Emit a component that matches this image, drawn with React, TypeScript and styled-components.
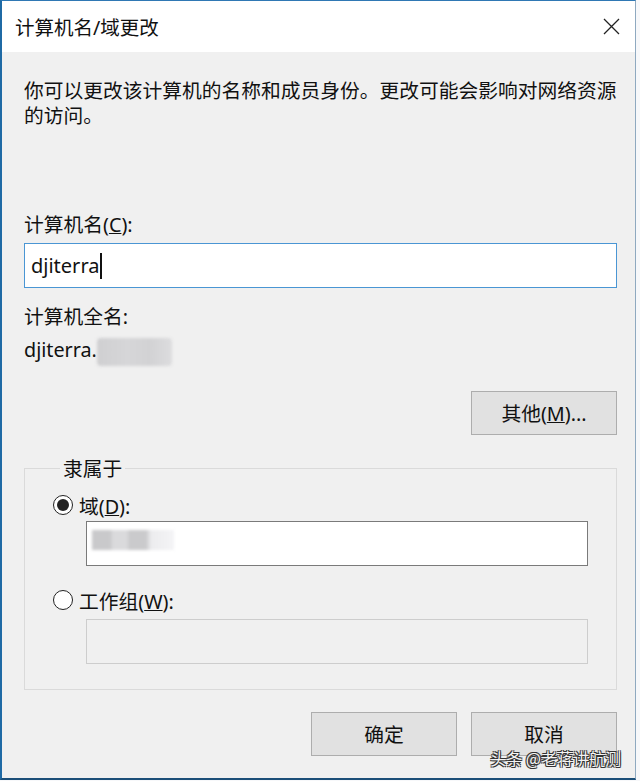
import React from "react";
import styled, { createGlobalStyle } from "styled-components";

const GlobalStyle = createGlobalStyle`
    html, body {
        margin: 0;
        padding: 0;
        background: #f7f8fa;
    }
    body {
        font-family: "Noto Sans", "Noto Sans CJK SC", sans-serif;
        color: #111;
    }
`;

const Window = styled.div`
    position: relative;
    width: 636px;
    height: 780px;
    box-sizing: border-box;
    display: flex;
    flex-direction: column;
    border-left: 2px solid #1f6aa5;
    border-top: 1px solid #2f78b4;
    border-right: 1px solid #8fa9c0;
    border-bottom: 2px solid #1b4e78;
    background: #f0f0f0;
`;

const TitleBar = styled.div`
    height: 51px;
    flex-shrink: 0;
    display: flex;
    align-items: center;
    justify-content: space-between;
    padding: 0 15px 0 13px;
    background: #ffffff;
`;

const Title = styled.div`
    font-size: 19.5px;
    color: #111;
`;

const CloseButton = styled.div`
    width: 18px;
    height: 18px;
    display: flex;
    align-items: center;
    justify-content: center;
`;

const Body = styled.div`
    flex: 1;
    display: flex;
    flex-direction: column;
    padding: 26px 18px 0 22px;
`;

const Text = styled.div<{ $top?: number }>`
    font-size: 19.75px;
    line-height: 25px;
    margin-top: ${(p) => p.$top ?? 0}px;
`;

const Edit = styled.div<{ $top?: number; $focused?: boolean; $disabled?: boolean }>`
    height: 45px;
    box-sizing: border-box;
    margin-top: ${(p) => p.$top ?? 0}px;
    display: flex;
    align-items: center;
    padding: 0 6px;
    font-size: 20px;
    background: ${(p) => (p.$disabled ? "#f0f0f0" : "#ffffff")};
    border: 1px solid
        ${(p) => (p.$focused ? "#4a96d4" : p.$disabled ? "#cdcdcd" : "#7a7a7a")};
`;

const Caret = styled.span`
    display: inline-block;
    width: 1.5px;
    height: 26px;
    background: #111;
    margin-left: 1px;
`;

const Blur = styled.span<{ $w: number; $h: number }>`
    display: inline-block;
    width: ${(p) => p.$w}px;
    height: ${(p) => p.$h}px;
    vertical-align: middle;
    background: linear-gradient(
        90deg,
        #cfcfd1 0%,
        #d6d6d8 40%,
        #d2d2d4 70%,
        #dcdcde 100%
    );
    border-radius: 4px;
    filter: blur(1.5px);
`;

const DomainBlur = styled.span`
    display: inline-block;
    width: 82px;
    height: 20px;
    margin-left: -1px;
    background: linear-gradient(
        90deg,
        #c9c9cb 0%,
        #c9c9cb 22%,
        #dadadc 26%,
        #dadadc 42%,
        #cacacc 46%,
        #cacacc 66%,
        #ececee 72%,
        #f4f4f6 100%
    );
    filter: blur(1.5px);
    margin-top: -6px;
`;

const Row = styled.div<{ $top?: number }>`
    display: flex;
    justify-content: flex-end;
    gap: 14px;
    margin-top: ${(p) => p.$top ?? 0}px;
`;

const Button = styled.div`
    width: 146px;
    height: 44px;
    box-sizing: border-box;
    display: flex;
    align-items: center;
    justify-content: center;
    font-size: 19.75px;
    background: #e1e1e1;
    border: 1px solid #adadad;
    color: #111;
`;

const Group = styled.fieldset`
    margin: 21px 0 0 0;
    padding: 12px 28px 25px 28px;
    border: 1px solid #dadada;
    min-width: 0;
`;

const Legend = styled.legend`
    font-size: 19.75px;
    line-height: 25px;
    padding: 0 3px;
    margin-left: 7px;
`;

const RadioRow = styled.div<{ $top?: number }>`
    display: flex;
    align-items: center;
    gap: 6px;
    height: 25px;
    font-size: 19.75px;
    margin-top: ${(p) => p.$top ?? 0}px;
`;

const RadioCircle = styled.span<{ $checked?: boolean }>`
    width: 20px;
    height: 20px;
    box-sizing: border-box;
    border-radius: 50%;
    border: 1.5px solid #222;
    background: #fff;
    display: flex;
    align-items: center;
    justify-content: center;
    &::after {
        content: "";
        width: 12px;
        height: 12px;
        border-radius: 50%;
        background: ${(p) => (p.$checked ? "#222" : "transparent")};
    }
`;

const Indented = styled.div`
    margin-left: 33px;
`;

const Watermark = styled.div`
    position: absolute;
    right: 14px;
    bottom: 12px;
    font-family: "Noto Sans CJK SC", sans-serif;
    font-size: 16px;
    line-height: 16px;
    color: #f4f4f4;
    text-shadow:
        1px 1px 0 #333,
        -1px -1px 0 #333,
        1px -1px 0 #333,
        -1px 1px 0 #333;
`;

const App = () => {
    return (
        <>
            <GlobalStyle />
            <Window>
                <TitleBar>
                    <Title>计算机名/域更改</Title>
                    <CloseButton>
                        <svg width="17" height="17" viewBox="0 0 17 17">
                            <path
                                d="M1 1 L16 16 M16 1 L1 16"
                                stroke="#222"
                                strokeWidth="1.3"
                                fill="none"
                            />
                        </svg>
                    </CloseButton>
                </TitleBar>
                <Body>
                    <Text>
                        你可以更改该计算机的名称和成员身份。更改可能会影响对网络资源
                        <br />
                        的访问。
                    </Text>
                    <Text $top={84}>
                        计算机名(<u>C</u>):
                    </Text>
                    <Edit $top={6} $focused>
                        djiterra
                        <Caret />
                    </Edit>
                    <Text $top={16}>计算机全名:</Text>
                    <Text $top={8}>
                        djiterra.
                        <Blur $w={75} $h={28} />
                    </Text>
                    <Row $top={25}>
                        <Button>
                            <span>
                                其他(<u>M</u>)...
                            </span>
                        </Button>
                    </Row>
                    <Group>
                        <Legend>隶属于</Legend>
                        <RadioRow>
                            <RadioCircle $checked />
                            <span>
                                域(<u>D</u>):
                            </span>
                        </RadioRow>
                        <Indented>
                            <Edit $top={3}>
                                <DomainBlur />
                            </Edit>
                        </Indented>
                        <RadioRow $top={22}>
                            <RadioCircle />
                            <span>
                                工作组(<u>W</u>):
                            </span>
                        </RadioRow>
                        <Indented>
                            <Edit $top={6} $disabled />
                        </Indented>
                    </Group>
                    <Row $top={22}>
                        <Button>确定</Button>
                        <Button>取消</Button>
                    </Row>
                </Body>
                <Watermark>头条 @老蒋讲航测</Watermark>
            </Window>
        </>
    );
};

export default App;
